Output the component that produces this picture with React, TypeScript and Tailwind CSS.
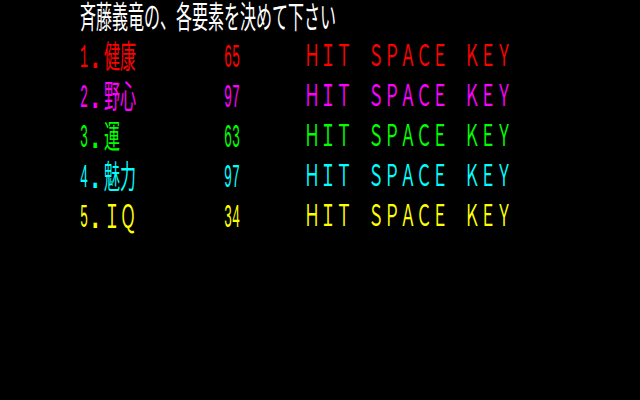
const ROWS = [
  { no: "1", name: "健康", value: "65", color: "text-[#ff0000]" },
  { no: "2", name: "野心", value: "97", color: "text-[#ff00ff]" },
  { no: "3", name: "運", value: "63", color: "text-[#00ff00]" },
  { no: "4", name: "魅力", value: "97", color: "text-[#00ffff]" },
  { no: "5", name: "ＩＱ", value: "34", color: "text-[#ffff00]" },
];

export default function App() {
  return (
    <div className="h-[400px] w-[640px] overflow-hidden bg-black font-['Noto_Sans_CJK_JP',sans-serif] text-[16px] leading-none text-white">
      <div className="pl-20">
        <div className="flex h-10 items-start">
          <div className="flex h-8 items-center">
            <span className="inline-block -translate-y-[2px] scale-y-[1.95] whitespace-pre">斉藤義竜の、各要素を決めて下さい</span>
          </div>
        </div>
        {ROWS.map((r) => (
          <div key={r.no} className={`h-10 ${r.color}`}>
            <div className="grid h-8 grid-cols-[24px_120px_80px_1fr] items-center">
              <span className="flex items-center font-['Liberation_Mono',monospace] whitespace-pre">
                <span className="inline-block w-2 translate-y-[3px] scale-y-[2.5] text-[13.3px]">{r.no}</span>
                <span className="inline-block w-2 translate-x-[2px] translate-y-[3px] scale-x-[1.5] scale-y-[2.2] text-[16px] font-bold">.</span>
              </span>
              <span className="inline-block -translate-y-[2px] scale-y-[2] whitespace-pre">{r.name}</span>
              <span className="inline-block translate-y-[3px] scale-y-[2.5] whitespace-pre font-['Liberation_Mono',monospace] text-[13.3px]">
                {r.value}
              </span>
              <span className="inline-block -translate-y-[3px] scale-y-[1.85] whitespace-pre">ＨＩＴ　ＳＰＡＣＥ　ＫＥＹ</span>
            </div>
          </div>
        ))}
      </div>
    </div>
  );
}
